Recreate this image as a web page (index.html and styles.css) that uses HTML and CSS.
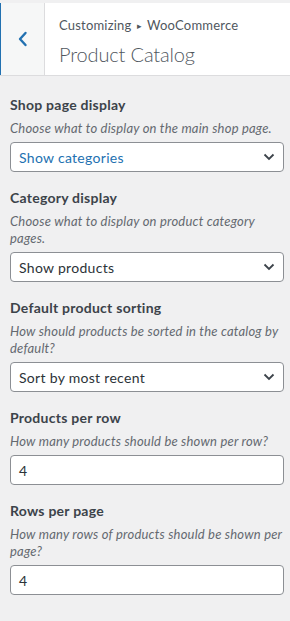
FILE: index.html
```html
<!DOCTYPE html>
<html lang="en">
<head>
<meta charset="utf-8">
<title>Product Catalog</title>
<link rel="stylesheet" href="styles.css">
</head>
<body>
<div class="panel">
  <header class="section-header">
    <button class="back" type="button" aria-label="Back">
      <svg width="12" height="16" viewBox="0 0 12 16" aria-hidden="true"><polyline points="8.5,2 3,8 8.5,14" fill="none" stroke="#2271b1" stroke-width="2.4" stroke-linecap="round" stroke-linejoin="round"/></svg>
    </button>
    <div class="section-title">
      <div class="action">Customizing <span class="sep">▸</span> WooCommerce</div>
      <h3 class="title">Product Catalog</h3>
    </div>
  </header>

  <ul class="controls">
    <li class="control">
      <span class="control-title">Shop page display</span>
      <span class="description">Choose what to display on the main shop page.</span>
      <div class="select active">
        <span>Show categories</span>
        <svg class="caret" width="12" height="8" viewBox="0 0 12 8" aria-hidden="true"><polyline points="1.5,1.5 6,6 10.5,1.5" fill="none" stroke="#3c434a" stroke-width="1.8"/></svg>
      </div>
    </li>
    <li class="control">
      <span class="control-title">Category display</span>
      <span class="description">Choose what to display on product category pages.</span>
      <div class="select">
        <span>Show products</span>
        <svg class="caret" width="12" height="8" viewBox="0 0 12 8" aria-hidden="true"><polyline points="1.5,1.5 6,6 10.5,1.5" fill="none" stroke="#3c434a" stroke-width="1.8"/></svg>
      </div>
    </li>
    <li class="control">
      <span class="control-title">Default product sorting</span>
      <span class="description">How should products be sorted in the catalog by default?</span>
      <div class="select">
        <span>Sort by most recent</span>
        <svg class="caret" width="12" height="8" viewBox="0 0 12 8" aria-hidden="true"><polyline points="1.5,1.5 6,6 10.5,1.5" fill="none" stroke="#3c434a" stroke-width="1.8"/></svg>
      </div>
    </li>
    <li class="control">
      <span class="control-title">Products per row</span>
      <span class="description">How many products should be shown per row?</span>
      <div class="input"><span>4</span></div>
    </li>
    <li class="control">
      <span class="control-title">Rows per page</span>
      <span class="description">How many rows of products should be shown per page?</span>
      <div class="input"><span>4</span></div>
    </li>
  </ul>
</div>
</body>
</html>
```
FILE: styles.css
```css
html, body {
  margin: 0;
  padding: 0;
  background: #f0f0f1;
}

body {
  font-family: Lato, "Noto Sans", sans-serif;
  color: #50575e;
}

.panel {
  padding-top: 3px;
}

.section-header {
  display: flex;
  height: 73px;
  box-sizing: border-box;
  background: #fff;
  border-bottom: 1px solid #dcdcde;
}

.back {
  width: 45px;
  flex: 0 0 45px;
  box-sizing: border-box;
  margin: 0;
  padding: 0 0 0 1px;
  background: #f6f7f7;
  border: 0;
  border-left: 1px solid #2271b1;
  border-right: 1px solid #dcdcde;
  display: flex;
  align-items: center;
  justify-content: center;
}

.back svg {
  display: block;
}

.section-title {
  padding: 10px 10px 0 14px;
}

.action {
  font-size: 13px;
  line-height: 24px;
  color: #50575e;
  letter-spacing: 0.2px;
}

.sep {
  font-family: "DejaVu Sans", sans-serif;
  font-size: 9px;
  position: relative;
  top: -1px;
  margin: 0 2px;
}

.title {
  margin: 2px 0 0;
  font-size: 20px;
  line-height: 26px;
  font-weight: 300;
  color: #50575e;
  letter-spacing: -0.15px;
}

.controls {
  list-style: none;
  margin: 0;
  padding: 19px 6px 0 10px;
}

.control {
  margin: 0 0 16px;
  display: flex;
  flex-direction: column;
}

.control-title {
  font-size: 14px;
  line-height: 20px;
  font-weight: 700;
  color: #3c434a;
  letter-spacing: 0.25px;
  margin-bottom: 5px;
}

.description {
  font-size: 13px;
  line-height: 17px;
  font-style: italic;
  color: #646970;
  letter-spacing: 0.2px;
  margin: 0 -2px 5px 0;
}

.select,
.input {
  height: 30px;
  box-sizing: border-box;
  background: #fff;
  border: 1px solid #8c8f94;
  border-radius: 4px;
  display: flex;
  align-items: center;
  padding: 0 8px;
  font-size: 14px;
  color: #2c3338;
  letter-spacing: 0.3px;
}

.select span,
.input span {
  flex: 1;
}

.select.active {
  color: #2271b1;
}

.caret {
  display: block;
  flex: 0 0 auto;
}
```
